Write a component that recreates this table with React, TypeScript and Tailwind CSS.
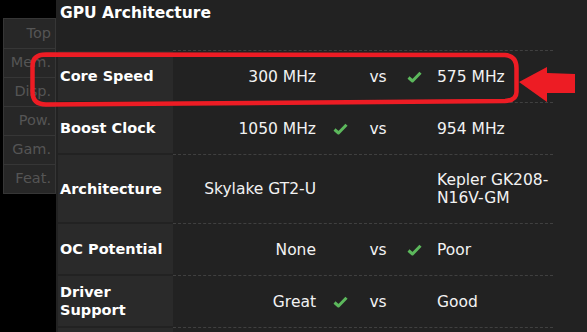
import React from 'react';

type Row = {
  label: string;
  left: string;
  right: string;
  win?: 'left' | 'right';
  vs: boolean;
  tall?: boolean;
};

const rows: Row[] = [
  { label: 'Core Speed', left: '300 MHz', right: '575 MHz', win: 'right', vs: true },
  { label: 'Boost Clock', left: '1050 MHz', right: '954 MHz', win: 'left', vs: true },
  { label: 'Architecture', left: 'Skylake GT2-U', right: 'Kepler GK208-N16V-GM', vs: false, tall: true },
  { label: 'OC Potential', left: 'None', right: 'Poor', win: 'right', vs: true },
  { label: 'Driver Support', left: 'Great', right: 'Good', win: 'left', vs: true },
];

const sideItems = ['Top', 'Mem.', 'Disp.', 'Pow.', 'Gam.', 'Feat.'];

const Check = () => (
  <svg width="15" height="12" viewBox="0 0 15 12" fill="none">
    <path d="M1.5 6.5 L5.5 10 L13.5 1.8" stroke="#5cb85c" strokeWidth="3" strokeLinejoin="round" />
  </svg>
);

const App: React.FC = () => {
  return (
    <div
      className="relative w-[587px] h-[332px] overflow-hidden bg-black flex text-[#f2f2f2]"
      style={{ fontFamily: '"DejaVu Sans", Verdana, sans-serif' }}
    >
      {/* Side nav */}
      <div className="w-[56px] shrink-0 pt-[18px] pl-[3px]">
        <div className="border border-[#363636] bg-[#272727]">
          {sideItems.map((s, i) => (
            <div
              key={s}
              className={`h-[29px] flex items-center justify-end pr-[4px] text-[14.5px] text-[#555555] ${
                i > 0 ? 'border-t border-[#363636]' : ''
              }`}
            >
              {s}
            </div>
          ))}
        </div>
      </div>

      {/* Main panel */}
      <div className="flex-1 bg-[#222222] pl-[2px]">
        <div className="h-[51px] flex flex-col justify-between">
          <div className="pl-[2px] pt-[2px] text-[15.5px] font-bold text-white">GPU Architecture</div>
          <div className="ml-[115px] w-[380px] border-b border-dashed border-[#404040]" />
        </div>

        {rows.map(r => (
          <div key={r.label} className="flex">
            <div
              className={`w-[115px] mb-[2px] ${r.tall ? 'h-[67px]' : 'h-[50px]'} bg-[#2a2a2a] flex items-center pl-[2px] text-[14.5px] leading-[18px] font-bold text-white`}
            >
              {r.label}
            </div>
            <div className="w-[380px] border-b border-dashed border-[#404040] flex items-center text-[15.5px] leading-[18px]">
              <div className="w-[147px] text-right pr-[4px]">{r.left}</div>
              <div className="w-[40px] flex justify-center">{r.win === 'left' && <Check />}</div>
              <div className="w-[36px] text-center">{r.vs ? 'vs' : ''}</div>
              <div className="w-[36px] flex justify-center">{r.win === 'right' && <Check />}</div>
              <div className="flex-1 pl-[5px]">{r.right}</div>
            </div>
          </div>
        ))}

        <div className="w-[115px] h-[20px] bg-[#2a2a2a]" />
      </div>

      {/* Annotation overlay */}
      <svg className="absolute left-0 top-0" width="587" height="332" viewBox="0 0 587 332">
        <path
          d="M46 54.5 L505 55 Q516.5 56 516.5 68 L516.5 92 Q516.5 100.5 505 101 L46 104.5 Q32.5 104.5 32.5 92 L32.5 66 Q32.5 54.5 46 54.5 Z"
          fill="none"
          stroke="#ed1c24"
          strokeWidth="4.5"
        />
        <polygon points="519,82 547,67 547,73 575,74 575,93 547,93 547,102" fill="#ed1c24" />
      </svg>
    </div>
  );
};

export default App;
